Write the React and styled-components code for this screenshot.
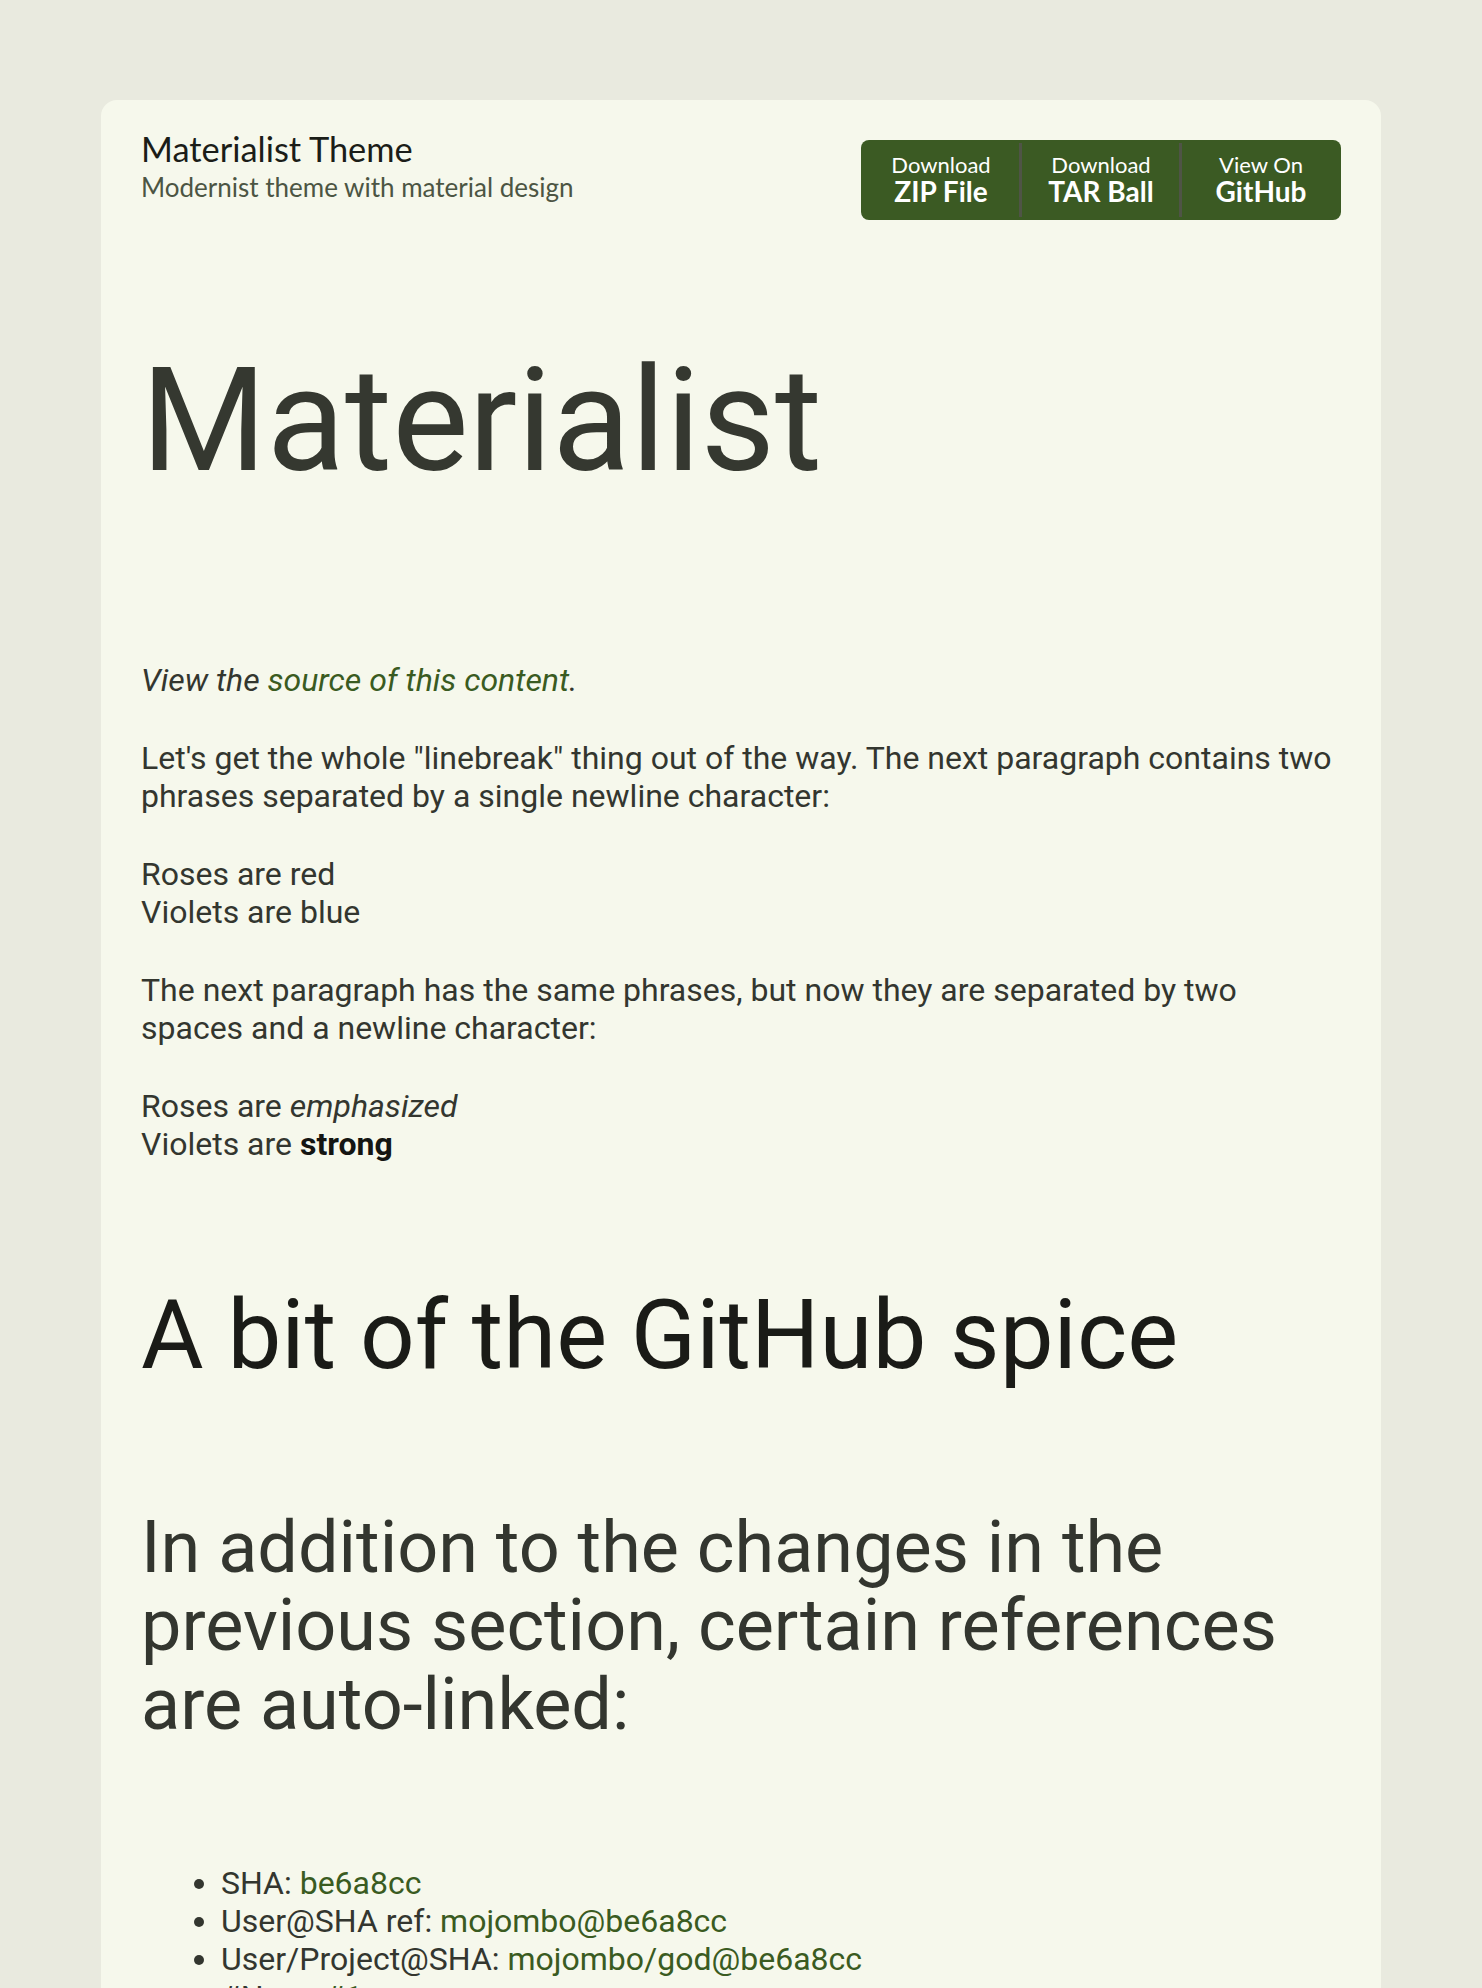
import styled, { createGlobalStyle } from "styled-components";

const GlobalStyle = createGlobalStyle`
  html, body {
    margin: 0;
    padding: 0;
    background: #e9eadf;
  }
  body {
    font-family: Roboto, "Noto Sans", sans-serif;
    color: #33362f;
  }
`;

const Page = styled.div`
  padding: 100px 0;
`;

const Card = styled.div`
  box-sizing: border-box;
  max-width: 1280px;
  margin: 0 auto;
  padding: 28px 40px 80px;
  background: #f6f8ec;
  border-radius: 16px;
`;

const Header = styled.header`
  display: flex;
  justify-content: space-between;
  align-items: flex-start;
`;

const Brand = styled.div`
  font-family: Lato, "Open Sans", sans-serif;
`;

const SiteName = styled.div`
  font-size: 34.4px;
  line-height: 1.2;
  color: #1b1d18;
`;

const Tagline = styled.div`
  margin-top: 3px;
  font-size: 26px;
  line-height: 1.2;
  color: #4c5543;
`;

const Downloads = styled.nav`
  display: flex;
  margin-top: 12px;
  background: #3b5a23;
  border-radius: 8px;
`;

const DownloadButton = styled.a`
  position: relative;
  box-sizing: border-box;
  width: 160px;
  height: 80px;
  padding-bottom: 3px;
  display: flex;
  flex-direction: column;
  align-items: center;
  justify-content: center;
  color: #fff;
  text-decoration: none;
  font-family: Lato, "Open Sans", sans-serif;

  & + &::before {
    content: "";
    position: absolute;
    left: -2px;
    top: 3px;
    bottom: 3px;
    width: 3px;
    background: #4f5446;
  }
`;

const Small = styled.span`
  font-size: 22px;
  line-height: 24px;
`;

const Big = styled.span`
  font-size: 28px;
  line-height: 28px;
  font-weight: 700;
`;

const Title = styled.h1`
  margin: 115px 0 153px;
  font-size: 144px;
  line-height: 1.2;
  font-weight: 400;
  color: #353830;
`;

const Para = styled.p`
  margin: 0 0 40px;
  font-size: 32px;
  line-height: normal;
`;

const Link = styled.a`
  color: #3a5b21;
  text-decoration: none;
`;

const Strong = styled.strong`
  color: #141512;
`;

const SectionTitle = styled.h2`
  margin: 116px 0 118px;
  font-size: 96px;
  line-height: normal;
  font-weight: 400;
  color: #1a1b17;
`;

const SubTitle = styled.h3`
  margin: 0 0 120px;
  font-size: 72px;
  line-height: 78.5px;
  font-weight: 400;
  color: #33362f;
`;

const List = styled.ul`
  margin: 0 0 40px;
  padding-left: 80px;
`;

const Item = styled.li`
  font-size: 32px;
  line-height: normal;
`;

const buttons = [
  { top: "Download", bottom: "ZIP File" },
  { top: "Download", bottom: "TAR Ball" },
  { top: "View On", bottom: "GitHub" },
];

const refs = [
  ["SHA: ", "be6a8cc"],
  ["User@SHA ref: ", "mojombo@be6a8cc"],
  ["User/Project@SHA: ", "mojombo/god@be6a8cc"],
  ["#Num: ", "#1"],
  ["User/#Num: ", "mojombo#1"],
  ["User/Project#Num: ", "mojombo/god#1"],
];

export default function App() {
  return (
    <>
      <GlobalStyle />
      <Page>
        <Card>
          <Header>
            <Brand>
              <SiteName>Materialist Theme</SiteName>
              <Tagline>Modernist theme with material design</Tagline>
            </Brand>
            <Downloads>
              {buttons.map((b) => (
                <DownloadButton href="#" key={b.bottom}>
                  <Small>{b.top}</Small>
                  <Big>{b.bottom}</Big>
                </DownloadButton>
              ))}
            </Downloads>
          </Header>

          <Title>Materialist</Title>

          <Para>
            <em>
              View the <Link href="#">source of this content</Link>.
            </em>
          </Para>
          <Para>
            Let's get the whole "linebreak" thing out of the way. The next
            paragraph contains two phrases separated by a single newline
            character:
          </Para>
          <Para>
            Roses are red
            <br />
            Violets are blue
          </Para>
          <Para>
            The next paragraph has the same phrases, but now they are separated
            by two spaces and a newline character:
          </Para>
          <Para>
            Roses are <em>emphasized</em>
            <br />
            Violets are <Strong>strong</Strong>
          </Para>

          <SectionTitle>A bit of the GitHub spice</SectionTitle>
          <SubTitle>
            In addition to the changes in the previous section, certain
            references are auto-linked:
          </SubTitle>

          <List>
            {refs.map(([label, value]) => (
              <Item key={label}>
                {label}
                <Link href="#">{value}</Link>
              </Item>
            ))}
          </List>
        </Card>
      </Page>
    </>
  );
}
